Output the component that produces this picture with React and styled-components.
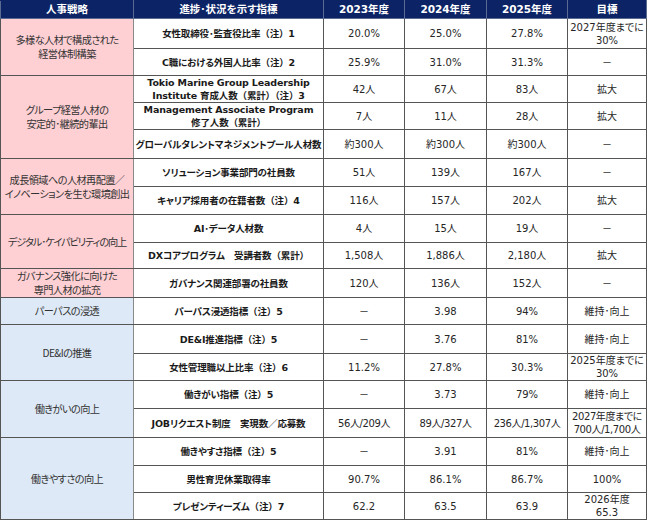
import React from "react";
import styled, { createGlobalStyle } from "styled-components";

const Global = createGlobalStyle`
  html, body { margin: 0; padding: 0; background: #ffffff; }
  body { font-family: "DejaVu Sans", "Noto Sans CJK JP", sans-serif; color: #1a1a1a; }
`;

const Table = styled.table`
  border-collapse: collapse;
  table-layout: fixed;
  width: 647px;
  margin: 0;
  font-feature-settings: "palt";
`;

const Col = styled.col`
  width: ${(p) => p.$w}px;
`;

const HeadCell = styled.th`
  height: 17px;
  padding: 0;
  background: #0c2365;
  color: #ffffff;
  font-family: "DejaVu Sans", "Noto Sans CJK JP", sans-serif;
  font-weight: 700;
  font-size: 10.5px;
  line-height: 13px;
  text-align: center;
  white-space: nowrap;
  border: 1px solid #5b6a90;
  border-top-color: #0c2365;
`;

const Row = styled.tr`
  height: ${(p) => p.$h}px;
`;

const StrategyCell = styled.td`
  padding: 0;
  background: ${(p) => (p.$tone === "blue" ? "#dde9f6" : "#ffd0d3")};
  color: #333333;
  font-family: "Noto Sans CJK JP", sans-serif;
  font-size: 10.2px;
  line-height: 14px;
  letter-spacing: ${(p) => (p.$squeeze ? "-1.1px" : "-0.6px")};
  text-align: center;
  vertical-align: middle;
  white-space: nowrap;
  overflow: hidden;
  border: 1px solid #555555;
  border-right-color: #8a8a8a;
`;

const IndicatorCell = styled.td`
  padding: 0;
  font-family: "DejaVu Sans", "Noto Sans CJK JP", sans-serif;
  font-weight: 700;
  font-size: 9.5px;
  line-height: 13px;
  letter-spacing: -0.15px;
  text-align: center;
  vertical-align: middle;
  white-space: nowrap;
  overflow: hidden;
  color: #1a1a1a;
  border: 1px solid #555555;
  border-left-color: #8a8a8a;
`;

const ValueCell = styled.td`
  padding: 0;
  font-family: "DejaVu Sans", "Noto Sans CJK JP", sans-serif;
  font-size: 10px;
  line-height: 13px;
  text-align: center;
  vertical-align: middle;
  white-space: nowrap;
  color: #262626;
  border: 1px solid #555555;
  letter-spacing: ${(p) => (p.$tight ? "-0.4px" : "0")};
`;

const Wide = styled.span`
  font-feature-settings: normal;
`;

const Segment = ({ text }) =>
  text.split(/([（）／])/).map((part, i) =>
    /^[（）／]$/.test(part) ? <Wide key={i}>{part}</Wide> : <React.Fragment key={i}>{part}</React.Fragment>
  );

const Lines = ({ text }) =>
  text.split("\n").map((t, i, a) => (
    <React.Fragment key={i}>
      <Segment text={t} />
      {i < a.length - 1 && <br />}
    </React.Fragment>
  ));

const rows = [
  { s: { t: "多様な人材で構成された\n経営体制構築", span: 2, tone: "pink" }, i: "女性取締役･監査役比率（注）1", v: ["20.0%", "25.0%", "27.8%", "2027年度までに\n30%"], h: 30 },
  { i: "C職における外国人比率（注）2", v: ["25.9%", "31.0%", "31.3%", "－"], h: 27 },
  { s: { t: "グループ経営人材の\n安定的･継続的輩出", span: 3, tone: "pink" }, i: "Tokio Marine Group Leadership\nInstitute 育成人数（累計）（注）3", v: ["42人", "67人", "83人", "拡大"], h: 27 },
  { i: "Management Associate Program\n修了人数（累計）", v: ["7人", "11人", "28人", "拡大"], h: 26 },
  { i: "グローバルタレントマネジメントプール人材数", v: ["約300人", "約300人", "約300人", "－"], h: 29 },
  { s: { t: "成長領域への人材再配置／\nイノベーションを生む環境創出", span: 2, tone: "pink" }, i: "ソリューション事業部門の社員数", v: ["51人", "139人", "167人", "－"], h: 28 },
  { i: "キャリア採用者の在籍者数（注）4", v: ["116人", "157人", "202人", "拡大"], h: 28 },
  { s: { t: "デジタル･ケイパビリティの向上", span: 2, tone: "pink", squeeze: true }, i: "AI･データ人材数", v: ["4人", "15人", "19人", "－"], h: 28 },
  { i: "DXコアプログラム　受講者数（累計）", v: ["1,508人", "1,886人", "2,180人", "拡大"], h: 26 },
  { s: { t: "ガバナンス強化に向けた\n専門人材の拡充", span: 1, tone: "pink" }, i: "ガバナンス関連部署の社員数", v: ["120人", "136人", "152人", "－"], h: 28 },
  { s: { t: "パーパスの浸透", span: 1, tone: "blue" }, i: "パーパス浸透指標（注）5", v: ["－", "3.98", "94%", "維持･向上"], h: 27 },
  { s: { t: "DE&Iの推進", span: 2, tone: "blue" }, i: "DE&I推進指標（注）5", v: ["－", "3.76", "81%", "維持･向上"], h: 29 },
  { i: "女性管理職以上比率（注）6", v: ["11.2%", "27.8%", "30.3%", "2025年度までに\n30%"], h: 27 },
  { s: { t: "働きがいの向上", span: 2, tone: "blue" }, i: "働きがい指標（注）5", v: ["－", "3.73", "79%", "維持･向上"], h: 28 },
  { i: "JOBリクエスト制度　実現数／応募数", v: ["56人/209人", "89人/327人", "236人/1,307人", "2027年度までに\n700人/1,700人"], h: 29, tightV: true },
  { s: { t: "働きやすさの向上", span: 3, tone: "blue" }, i: "働きやすさ指標（注）5", v: ["－", "3.91", "81%", "維持･向上"], h: 28 },
  { i: "男性育児休業取得率", v: ["90.7%", "86.1%", "86.7%", "100%"], h: 27 },
  { i: "プレゼンティーズム（注）7", v: ["62.2", "63.5", "63.9", "2026年度\n65.3"], h: 27 },
];

const widths = [133, 190, 81, 82, 81, 79];
const heads = ["人事戦略", "進捗･状況を示す指標", "2023年度", "2024年度", "2025年度", "目標"];

export default function App() {
  return (
    <>
      <Global />
      <Table>
        <colgroup>
          {widths.map((w, i) => (
            <Col key={i} $w={w} />
          ))}
        </colgroup>
        <thead>
          <tr>
            {heads.map((h) => (
              <HeadCell key={h}>{h}</HeadCell>
            ))}
          </tr>
        </thead>
        <tbody>
          {rows.map((r, idx) => (
            <Row key={idx} $h={r.h}>
              {r.s && (
                <StrategyCell rowSpan={r.s.span} $tone={r.s.tone} $squeeze={r.s.squeeze}>
                  <Lines text={r.s.t} />
                </StrategyCell>
              )}
              <IndicatorCell>
                <Lines text={r.i} />
              </IndicatorCell>
              {r.v.map((v, j) => (
                <ValueCell key={j} $tight={r.tightV}>
                  <Lines text={v} />
                </ValueCell>
              ))}
            </Row>
          ))}
        </tbody>
      </Table>
    </>
  );
}
